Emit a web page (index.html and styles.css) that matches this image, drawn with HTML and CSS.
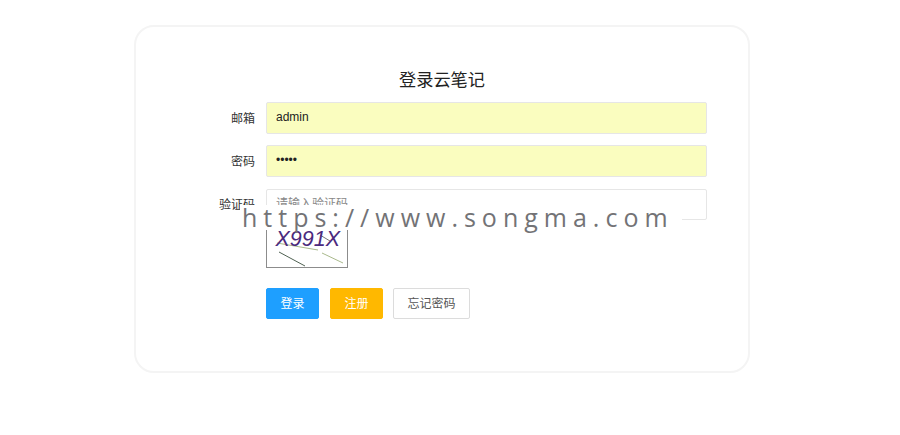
FILE: index.html
```html
<!DOCTYPE html>
<html lang="zh-CN">
<head>
    <meta charset="UTF-8">
    <meta name="viewport" content="width=device-width, initial-scale=1.0">
    <title>登录云笔记</title>
    <link rel="stylesheet" href="styles.css">
</head>
<body>
    <div class="login-box">
        <h1 class="login-title">登录云笔记</h1>
        <form class="login-form">
            <div class="form-row">
                <label class="form-label">邮箱</label>
                <input class="form-input filled" type="text" value="admin">
            </div>
            <div class="form-row">
                <label class="form-label">密码</label>
                <input class="form-input filled" type="password" value="admin">
            </div>
            <div class="form-row code-row">
                <label class="form-label">验证码</label>
                <input class="form-input" type="text" placeholder="请输入验证码">
            </div>
            <div class="captcha-row">
                <svg class="captcha" width="82" height="42" viewBox="0 0 82 42">
                    <rect x="0.5" y="0.5" width="81" height="41" fill="#fff" stroke="#8c8c8c"/>
                    <path d="M11 17 L52 24" stroke="#a9b98c" stroke-width="1" fill="none"/>
                    <path d="M54 9 L64 15" stroke="#777" stroke-width="1" fill="none"/>
                    <path d="M13 26 L39 40" stroke="#4f6152" stroke-width="1" fill="none"/>
                    <path d="M56 27 L77 37" stroke="#a9b98c" stroke-width="1" fill="none"/>
                    <text class="captcha-text" x="9.5" y="20">X991X</text>
                </svg>
            </div>
            <div class="btn-row">
                <button class="btn btn-blue" type="button">登录</button>
                <button class="btn btn-yellow" type="button">注册</button>
                <button class="btn btn-plain" type="button">忘记密码</button>
            </div>
        </form>
    </div>
    <div class="watermark">https://www.songma.com</div>
</body>
</html>
```

FILE: styles.css
```css
* {
    box-sizing: border-box;
    margin: 0;
    padding: 0;
}
body {
    font-family: 'Liberation Sans', 'Noto Sans CJK SC', sans-serif;
    font-size: 12px;
    color: #333;
    background: #fff;
    height: 435px;
    overflow: hidden;
    padding: 25px 0 0 134px;
}
.login-box {
    width: 616px;
    height: 348px;
    border: 2px solid #f4f4f4;
    border-radius: 20px;
    padding: 41px 41px 0 0;
}
.login-title {
    font-size: 17.2px;
    font-weight: 400;
    line-height: 24px;
    color: #222;
    text-align: center;
    padding-left: 41px;
    margin-bottom: 10px;
}
.form-row {
    display: flex;
    align-items: center;
    margin-bottom: 11px;
}
.code-row {
    margin-top: 12px;
}
.form-label {
    width: 119px;
    margin-right: 11px;
    padding-bottom: 2px;
    text-align: right;
    color: #333;
}
.form-input {
    flex: 1;
    height: 32px;
    padding: 0 9px 2px;
    border: 1px solid #e6e6e6;
    border-radius: 2px;
    font-family: inherit;
    font-size: 12px;
    color: #222;
    background: #fff;
    outline: none;
}
.code-row .form-input {
    height: 31px;
}
.form-input.filled {
    background: #fafdbf;
}
.form-input::placeholder {
    color: #888;
}
.captcha-row {
    margin-left: 130px;
    margin-top: -5px;
    height: 42px;
}
.captcha {
    display: block;
}
.captcha-text {
    font-family: 'Liberation Sans', sans-serif;
    font-size: 21.5px;
    font-style: italic;
    fill: #4b2a7d;
}
.btn-row {
    display: flex;
    gap: 11px;
    margin-left: 130px;
    margin-top: 20px;
}
.btn {
    height: 31px;
    padding-bottom: 3px;
    border-radius: 2px;
    font-family: inherit;
    font-size: 12px;
    cursor: pointer;
}
.btn-blue {
    width: 53px;
    background: #1e9fff;
    border: 1px solid #1e9fff;
    color: #fff;
}
.btn-yellow {
    width: 53px;
    background: #ffb800;
    border: 1px solid #ffb800;
    color: #fff;
}
.btn-plain {
    width: 77px;
    margin-left: -1px;
    background: #fff;
    border: 1px solid #dcdcdc;
    color: #555;
}
/* 水印 */
.watermark {
    position: absolute;
    left: 240px;
    top: 205px;
    width: 442px;
    height: 25px;
    padding-left: 2px;
    background: #fff;
    font-family: 'Open Sans', sans-serif;
    font-size: 25px;
    line-height: 25px;
    letter-spacing: 6px;
    color: #737376;
    white-space: nowrap;
}
```
